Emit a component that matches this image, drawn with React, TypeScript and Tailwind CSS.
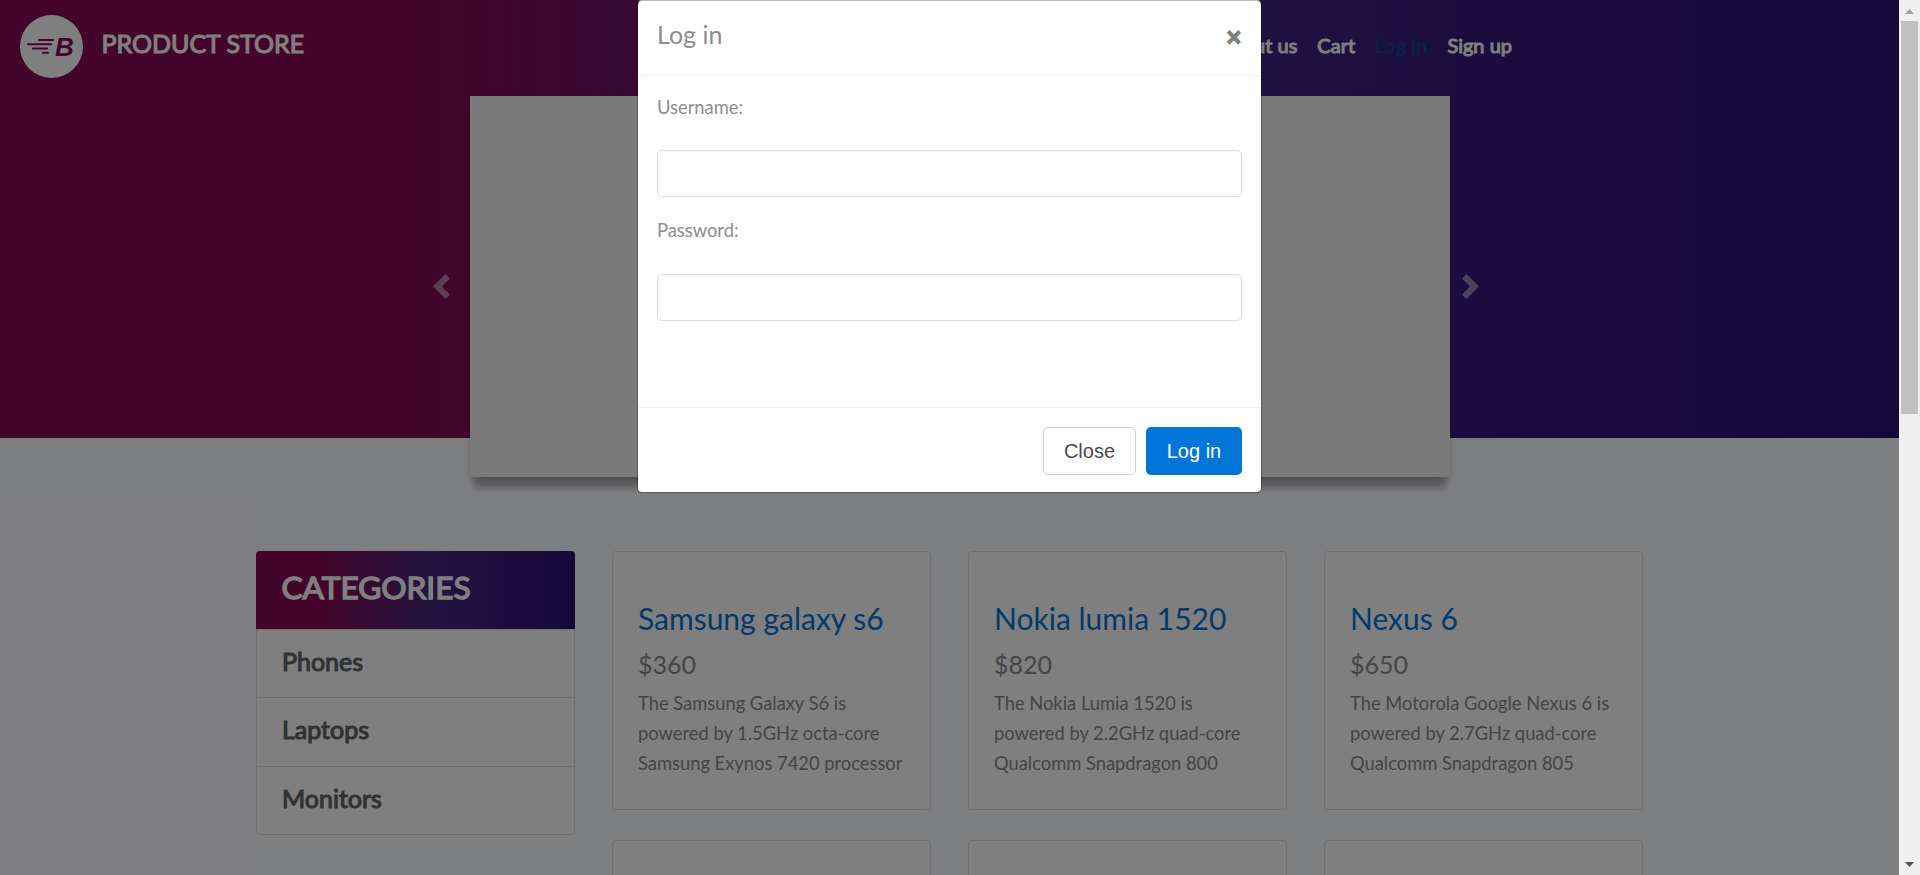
import React from 'react';

const hero = 'bg-[linear-gradient(to_right,#870b55_21%,#442984_57%,#280f74_100%)]';

const products = [
  { name: 'Samsung galaxy s6', price: '$360', lines: ['The Samsung Galaxy S6 is', 'powered by 1.5GHz octa-core', 'Samsung Exynos 7420 processor'] },
  { name: 'Nokia lumia 1520', price: '$820', lines: ['The Nokia Lumia 1520 is', 'powered by 2.2GHz quad-core', 'Qualcomm Snapdragon 800'] },
  { name: 'Nexus 6', price: '$650', lines: ['The Motorola Google Nexus 6 is', 'powered by 2.7GHz quad-core', 'Qualcomm Snapdragon 805'] },
];

function Logo() {
  return (
    <svg className="ml-5 h-[63px] w-[63px]" viewBox="0 0 63 63">
      <circle cx="31.5" cy="31.5" r="31.5" fill="#fff" />
      <g stroke="#870b55" strokeWidth="2.1" strokeLinecap="round">
        <path d="M19 25H33M8 29.2H31M13 33.5H27M23 37.8H28" />
      </g>
      <text x="35" y="41" fill="#870b55" className="font-['Liberation_Sans'] text-[26px] font-bold italic">B</text>
    </svg>
  );
}

function Header() {
  return (
    <header className={`h-[438px] ${hero}`}>
      <nav className="flex h-24 items-start text-white">
        <div className="pt-[15px]"><Logo /></div>
        <span className="ml-[18.5px] mt-6 text-[25px] leading-[39px] [-webkit-text-stroke:1.1px_currentColor]">PRODUCT STORE</span>
        <div className="ml-auto mr-[387px] mt-[30px] flex gap-5 text-xl leading-[30px] [-webkit-text-stroke:1px_currentColor]">
          <span>About us</span>
          <span>Cart</span>
          <span className="text-[#014c8c] [-webkit-text-stroke:0px]">Log in</span>
          <span>Sign up</span>
        </div>
      </nav>
      <div className="flex items-center">
        <div className="flex w-[470px] justify-end pr-5">
          <svg className="h-[25px] w-[17px] opacity-50" viewBox="0 0 17 25"><path d="M12.5 0L17 4.5L9 12.5L17 20.5L12.5 25L0 12.5Z" fill="#eee" /></svg>
        </div>
        <div className="h-[381px] w-[980px] bg-[#f4f4f4] shadow-[0_14px_8px_-4px_rgba(0,0,0,0.33),0_1px_4px_rgba(0,0,0,0.12)]" />
        <svg className="ml-3 h-[25px] w-[17px] opacity-50" viewBox="0 0 17 25"><path d="M4.5 0L0 4.5L8 12.5L0 20.5L4.5 25L17 12.5Z" fill="#eee" /></svg>
      </div>
    </header>
  );
}

function Categories() {
  return (
    <div className="w-[319px] text-[25px] text-[#636566] [-webkit-text-stroke:1.1px_currentColor]">
      <div className={`h-[78px] rounded-t-[4px] pl-[25.5px] pt-[11px] text-[31.6px] leading-[50px] text-white [-webkit-text-stroke:1.4px_currentColor] ${hero}`}>CATEGORIES</div>
      <div className="rounded-b-[4px] border border-[#dfdfdf] bg-white">
        <div className="h-[68px] border-b border-[#dfdfdf] pl-[25px] leading-[63px]">Phones</div>
        <div className="h-[69px] border-b border-[#dfdfdf] pl-[25px] leading-[63px]">Laptops</div>
        <div className="h-[67px] pl-[25px] leading-[63px]">Monitors</div>
      </div>
    </div>
  );
}

function Products() {
  return (
    <div className="grid grid-cols-3 gap-x-[37px] gap-y-[30px]">
      {products.map((p) => (
        <div key={p.name} className="h-[259px] w-[319px] rounded-[4px] border border-[#dfdfdf] bg-white pl-[25px] pt-[47px] text-[#8a8a8a]">
          <h4 className="text-[30px] leading-[38px] text-[#0275d8]">{p.name}</h4>
          <h5 className="mt-2 text-[25px] leading-[38px]">{p.price}</h5>
          <div className="mt-[5px] text-[18.33px] leading-[30px]">
            {p.lines.map((l) => <p key={l}>{l}</p>)}
          </div>
        </div>
      ))}
      {products.map((p) => (
        <div key={p.price} className="h-[259px] w-[319px] rounded-[4px] border border-[#dfdfdf] bg-white" />
      ))}
    </div>
  );
}

function LoginModal() {
  const input = 'block h-[47px] w-full rounded-[5px] border border-[#dcdcdc] bg-white';
  return (
    <div className="absolute left-[637px] top-0 h-[493px] w-[625px] rounded-[5px] border border-black/25 border-t-white/70 bg-white bg-clip-padding text-[#8d8d8d]">
      <div className="flex h-[75px] items-start justify-between border-b border-[#f2f2f2] px-[19px] pt-[15px]">
        <h5 className="text-[25px] leading-[37px]">Log in</h5>
        <span className="mt-[6px] mr-[1px] font-['Liberation_Sans'] text-[25px] leading-[30px] font-bold text-[#808080] [-webkit-text-stroke:1.2px_currentColor]">×</span>
      </div>
      <div className="h-[332px] border-b border-[#f2f2f2] px-[19px] pt-[16px] text-[18.33px] leading-[30px]">
        <label className="block h-[58px]">Username:</label>
        <input className={input} />
        <label className="mt-[18px] block h-[59px]">Password:</label>
        <input className={input} />
      </div>
      <div className="flex justify-end gap-[10px] px-[19px] pt-[19px] font-['Liberation_Sans'] text-[20px]">
        <button className="h-[48px] w-[93px] rounded-[5px] border border-[#cfcfcf] text-[#494b4c]">Close</button>
        <button className="h-[48px] w-[96px] rounded-[5px] bg-[#0275d8] text-white">Log in</button>
      </div>
    </div>
  );
}

function Scrollbar() {
  return (
    <div className="flex h-full w-[21px] flex-col items-center bg-[#f0f0f0]">
      <div className="flex h-[21px] items-center pt-[1px]">
        <svg className="h-[5px] w-[9px]" viewBox="0 0 9 5"><path d="M0 5L4.5 0L9 5Z" fill="#a0a0a0" /></svg>
      </div>
      <div className="h-[393px] w-[17px] bg-[#c1c1c1]" />
      <div className="mt-auto flex h-[21px] items-center">
        <svg className="h-[5px] w-[9px]" viewBox="0 0 9 5"><path d="M0 0L4.5 5L9 0Z" fill="#505050" /></svg>
      </div>
    </div>
  );
}

export default function App() {
  return (
    <div className="relative flex h-[875px] w-[1920px] overflow-hidden font-[Lato,sans-serif]">
      <div className="h-[875px] w-[1899px] overflow-hidden bg-[#fbfcff]">
        <Header />
        <main className="ml-[256px] mt-[113px] flex items-start gap-[37px]">
          <Categories />
          <Products />
        </main>
      </div>
      <Scrollbar />
      <div className="absolute left-0 top-0 h-[875px] w-[1899px] bg-black/50" />
      <LoginModal />
    </div>
  );
}
